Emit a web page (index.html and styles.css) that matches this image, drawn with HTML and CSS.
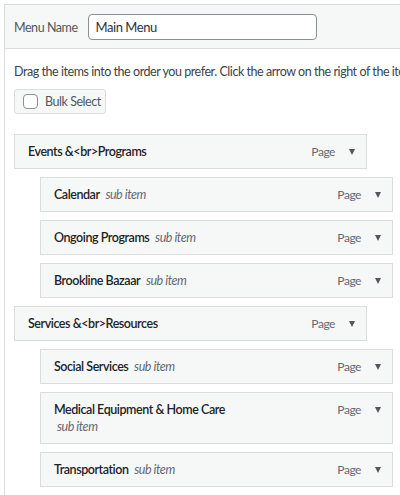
FILE: index.html
```html
<!DOCTYPE html>
<html>
<head>
<meta charset="utf-8">
<link rel="stylesheet" href="styles.css">
</head>
<body>
<div class="panel">
  <div class="header">
    <label class="label">Menu Name</label>
    <div class="input">Main Menu</div>
  </div>
  <div class="content">
    <p class="desc">Drag the items into the order you prefer. Click the arrow on the right of the item to reveal additional configuration options.</p>
    <div class="bulk"><span class="cb"></span><span>Bulk Select</span></div>
    <ul class="menu">
      <li class="item top">
        <div class="title"><span class="name">Events &amp;&lt;br&gt;Programs</span></div>
        <div class="controls"><span class="type">Page</span><span class="arrow"></span></div>
      </li>
      <li class="item sub">
        <div class="title"><span class="name">Calendar</span> <span class="subtag">sub item</span></div>
        <div class="controls"><span class="type">Page</span><span class="arrow"></span></div>
      </li>
      <li class="item sub">
        <div class="title"><span class="name">Ongoing Programs</span> <span class="subtag">sub item</span></div>
        <div class="controls"><span class="type">Page</span><span class="arrow"></span></div>
      </li>
      <li class="item sub">
        <div class="title"><span class="name">Brookline Bazaar</span> <span class="subtag">sub item</span></div>
        <div class="controls"><span class="type">Page</span><span class="arrow"></span></div>
      </li>
      <li class="item top">
        <div class="title"><span class="name">Services &amp;&lt;br&gt;Resources</span></div>
        <div class="controls"><span class="type">Page</span><span class="arrow"></span></div>
      </li>
      <li class="item sub">
        <div class="title"><span class="name">Social Services</span> <span class="subtag">sub item</span></div>
        <div class="controls"><span class="type">Page</span><span class="arrow"></span></div>
      </li>
      <li class="item sub">
        <div class="title"><span class="name">Medical Equipment &amp; Home Care</span> <span class="subtag">sub item</span></div>
        <div class="controls"><span class="type">Page</span><span class="arrow"></span></div>
      </li>
      <li class="item sub">
        <div class="title"><span class="name">Transportation</span> <span class="subtag">sub item</span></div>
        <div class="controls"><span class="type">Page</span><span class="arrow"></span></div>
      </li>
    </ul>
  </div>
</div>
</body>
</html>
```

FILE: styles.css
```css
html, body {
  margin: 0;
  padding: 0;
  background: #fff;
  overflow: hidden;
}
body {
  font-family: Lato, "Open Sans", sans-serif;
  font-size: 12.5px;
  letter-spacing: -0.45px;
  color: #3c434a;
}
.panel {
  margin: 4px 0 0 4px;
  width: 420px;
  height: 520px;
  border-left: 1px solid #dcdcde;
  border-top: 1px solid #dcdcde;
  background: #fff;
  overflow: hidden;
}
.header {
  display: flex;
  align-items: center;
  gap: 10px;
  background: #f6f7f7;
  border-bottom: 1px solid #dcdcde;
  padding: 9px 0 8px 9px;
}
.label {
  color: #50575e;
  white-space: nowrap;
}
.input {
  box-sizing: border-box;
  width: 229px;
  height: 26px;
  border: 1px solid #8c8f94;
  border-radius: 4px;
  background: #fff;
  color: #2c3338;
  padding: 0 7px;
  line-height: 24px;
  font-size: 13px;
}
.content {
  padding: 14px 0 0 9px;
}
.desc {
  margin: 0;
  line-height: 18px;
  white-space: nowrap;
  color: #3c434a;
}
.bulk {
  margin-top: 8px;
  box-sizing: border-box;
  width: 92px;
  height: 25px;
  display: flex;
  align-items: center;
  gap: 7px;
  padding-left: 8px;
  background: #f6f7f7;
  border: 1px solid #dcdcde;
  border-radius: 3px;
  color: #50575e;
  white-space: nowrap;
}
.cb {
  flex: none;
  box-sizing: border-box;
  width: 15px;
  height: 15px;
  border: 1px solid #8c8f94;
  border-radius: 4px;
  background: #fff;
}
.menu {
  list-style: none;
  margin: 20px 0 0 0;
  padding: 0;
}
.item {
  box-sizing: border-box;
  display: flex;
  align-items: flex-start;
  width: 353px;
  background: #f6f7f7;
  border: 1px solid #dcdcde;
  padding: 8px 0 8px 13px;
  line-height: 17px;
  margin-bottom: 8px;
}
.item.sub {
  margin-left: 26px;
}
.title {
  flex: 1;
  max-width: 190px;
}
.name {
  font-weight: 600;
  color: #1d2327;
}
.subtag {
  display: inline-block;
  margin-left: 3px;
  font-style: italic;
  color: #646970;
}
.controls {
  margin-left: auto;
  display: flex;
  align-items: center;
  height: 17px;
  padding-right: 11px;
}
.type {
  color: #646970;
  font-size: 12px;
}
.arrow {
  margin-left: 14px;
  width: 0;
  height: 0;
  border-left: 3.5px solid transparent;
  border-right: 3.5px solid transparent;
  border-top: 6px solid #50575e;
}
```
